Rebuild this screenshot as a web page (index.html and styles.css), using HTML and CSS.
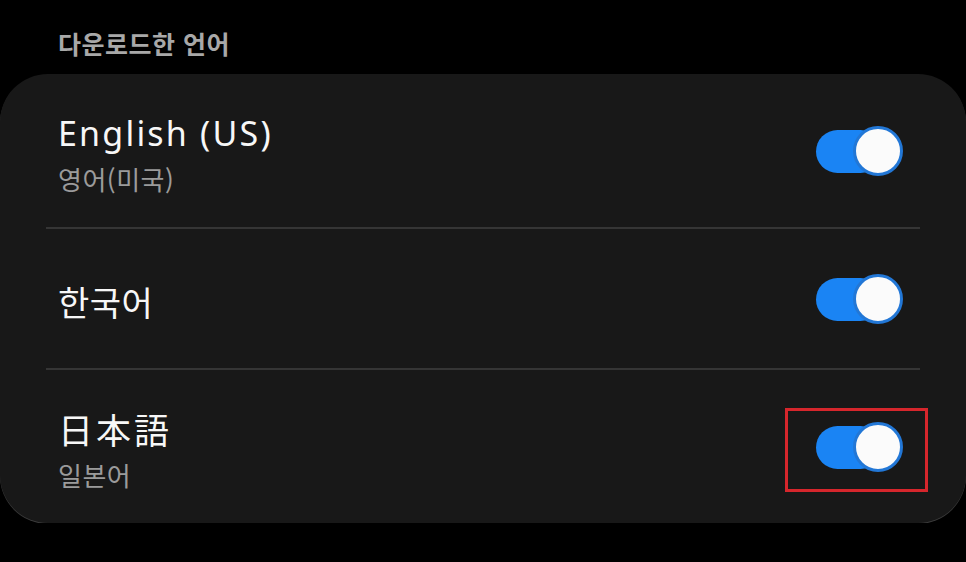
FILE: index.html
```html
<!DOCTYPE html>
<html lang="ko">
<head>
    <meta charset="UTF-8">
    <meta name="viewport" content="width=device-width, initial-scale=1.0">
    <title>다운로드한 언어</title>
    <link rel="stylesheet" href="styles.css">
</head>
<body>
    <h2 class="section-title">다운로드한 언어</h2>

    <div class="card">
        <div class="row">
            <div class="lang">
                <div class="lang-name latin">English (US)</div>
                <div class="lang-sub">영어(미국)</div>
            </div>
            <span class="toggle"><span class="track"></span><span class="thumb"></span></span>
        </div>

        <div class="row">
            <div class="lang">
                <div class="lang-name">한국어</div>
            </div>
            <span class="toggle"><span class="track"></span><span class="thumb"></span></span>
        </div>

        <div class="row">
            <div class="lang">
                <div class="lang-name jp">日本語</div>
                <div class="lang-sub">일본어</div>
            </div>
            <span class="toggle marked"><span class="track"></span><span class="thumb"></span></span>
        </div>
    </div>
</body>
</html>
```

FILE: styles.css
```css
body {
    margin: 0;
    padding: 0;
    background-color: #000;
    font-family: "Noto Sans CJK KR", "Noto Sans", sans-serif;
    color: #f5f5f5;
}

/* Section heading above the card */
.section-title {
    margin: 0;
    height: 74px;
    padding-left: 58px;
    box-sizing: border-box;
    padding-top: 25px;
    font-size: 25px;
    line-height: 36px;
    font-weight: 700;
    color: #a8a8a8;
    letter-spacing: 0.5px;
}

.card {
    background-color: #181818;
    border-radius: 48px;
    box-shadow: 0 1px 0 #3a3a3a;
}

.row {
    margin: 0 46px;
    padding: 0 17px 0 12px;
    display: flex;
    align-items: center;
    justify-content: space-between;
    height: 153px;
}

.row + .row {
    border-top: 2px solid #353535;
    height: 139px;
}

.row:last-child {
    height: 153px;
}

.lang {
    padding-top: 6px;
}

.lang-name {
    font-size: 34px;
    line-height: 42px;
    color: #f7f7f7;
    letter-spacing: 0.5px;
}

.lang-name.latin {
    font-family: "Noto Sans", sans-serif;
    font-size: 34px;
    letter-spacing: 2.2px;
}

.lang-name.jp {
    font-family: "Noto Sans CJK JP", sans-serif;
    font-size: 35px;
    letter-spacing: 3px;
}

.lang-sub {
    margin-top: 8px;
    font-size: 26px;
    line-height: 34px;
    color: #9b9b9b;
    letter-spacing: 0.5px;
}

/* Switch */
.toggle {
    position: relative;
    display: block;
    width: 87px;
    height: 50px;
}

.track {
    position: absolute;
    left: 0;
    top: 4px;
    width: 66px;
    height: 43px;
    border-radius: 22px;
    background-color: #1a84f4;
}

.thumb {
    position: absolute;
    right: 0;
    top: 0;
    width: 44px;
    height: 44px;
    border-radius: 50%;
    background-color: #fbfbfb;
    border: 3px solid #2277d6;
}

/* red highlight box around the last switch */
.marked::after {
    content: "";
    position: absolute;
    left: -31px;
    right: -25px;
    top: -14px;
    bottom: -20px;
    border: 3px solid #d6262c;
}
```
